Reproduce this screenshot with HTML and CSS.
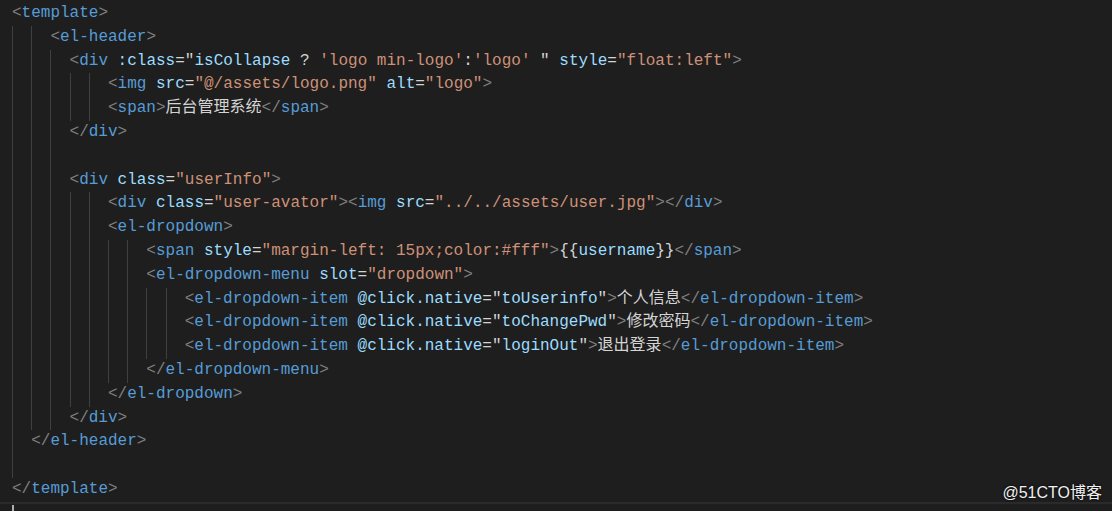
FILE: index.html
```html
<!DOCTYPE html>
<html lang="en">
<head>
    <meta charset="UTF-8">
    <title>template</title>
    <link rel="stylesheet" href="styles.css">
</head>
<body>
<div class="editor">
    <div class="line"><span class="p">&lt;</span><span class="t">template</span><span class="p">&gt;</span></div>
    <div class="line"><i></i><i></i><span class="p">&lt;</span><span class="t">el-header</span><span class="p">&gt;</span></div>
    <div class="line"><i></i><i></i><i></i><span class="p">&lt;</span><span class="t">div</span> <span class="a">:class</span>=<span class="w">"</span><span class="a">isCollapse</span> ? <span class="s">'logo min-logo'</span>:<span class="s">'logo'</span> <span class="w">"</span> <span class="a">style</span>=<span class="s">"float:left"</span><span class="p">&gt;</span></div>
    <div class="line"><i></i><i></i><i></i><i></i><i></i><span class="p">&lt;</span><span class="t">img</span> <span class="a">src</span>=<span class="s">"@/assets/logo.png"</span> <span class="a">alt</span>=<span class="s">"logo"</span><span class="p">&gt;</span></div>
    <div class="line"><i></i><i></i><i></i><i></i><i></i><span class="p">&lt;</span><span class="t">span</span><span class="p">&gt;</span>后台管理系统<span class="p">&lt;/</span><span class="t">span</span><span class="p">&gt;</span></div>
    <div class="line"><i></i><i></i><i></i><span class="p">&lt;/</span><span class="t">div</span><span class="p">&gt;</span></div>
    <div class="line"><i></i><i></i><i></i></div>
    <div class="line"><i></i><i></i><i></i><span class="p">&lt;</span><span class="t">div</span> <span class="a">class</span>=<span class="s">"userInfo"</span><span class="p">&gt;</span></div>
    <div class="line"><i></i><i></i><i></i><i></i><i></i><span class="p">&lt;</span><span class="t">div</span> <span class="a">class</span>=<span class="s">"user-avator"</span><span class="p">&gt;&lt;</span><span class="t">img</span> <span class="a">src</span>=<span class="s">"../../assets/user.jpg"</span><span class="p">&gt;&lt;/</span><span class="t">div</span><span class="p">&gt;</span></div>
    <div class="line"><i></i><i></i><i></i><i></i><i></i><span class="p">&lt;</span><span class="t">el-dropdown</span><span class="p">&gt;</span></div>
    <div class="line"><i></i><i></i><i></i><i></i><i></i><i></i><i></i><span class="p">&lt;</span><span class="t">span</span> <span class="a">style</span>=<span class="s">"margin-left: 15px;color:#fff"</span><span class="p">&gt;</span>{{<span class="a">username</span>}}<span class="p">&lt;/</span><span class="t">span</span><span class="p">&gt;</span></div>
    <div class="line"><i></i><i></i><i></i><i></i><i></i><i></i><i></i><span class="p">&lt;</span><span class="t">el-dropdown-menu</span> <span class="a">slot</span>=<span class="s">"dropdown"</span><span class="p">&gt;</span></div>
    <div class="line"><i></i><i></i><i></i><i></i><i></i><i></i><i></i><i></i><i></i><span class="p">&lt;</span><span class="t">el-dropdown-item</span> <span class="a">@click.native</span>=<span class="w">"</span><span class="a">toUserinfo</span><span class="w">"</span><span class="p">&gt;</span>个人信息<span class="p">&lt;/</span><span class="t">el-dropdown-item</span><span class="p">&gt;</span></div>
    <div class="line"><i></i><i></i><i></i><i></i><i></i><i></i><i></i><i></i><i></i><span class="p">&lt;</span><span class="t">el-dropdown-item</span> <span class="a">@click.native</span>=<span class="w">"</span><span class="a">toChangePwd</span><span class="w">"</span><span class="p">&gt;</span>修改密码<span class="p">&lt;/</span><span class="t">el-dropdown-item</span><span class="p">&gt;</span></div>
    <div class="line"><i></i><i></i><i></i><i></i><i></i><i></i><i></i><i></i><i></i><span class="p">&lt;</span><span class="t">el-dropdown-item</span> <span class="a">@click.native</span>=<span class="w">"</span><span class="a">loginOut</span><span class="w">"</span><span class="p">&gt;</span>退出登录<span class="p">&lt;/</span><span class="t">el-dropdown-item</span><span class="p">&gt;</span></div>
    <div class="line"><i></i><i></i><i></i><i></i><i></i><i></i><i></i><span class="p">&lt;/</span><span class="t">el-dropdown-menu</span><span class="p">&gt;</span></div>
    <div class="line"><i></i><i></i><i></i><i></i><i></i><span class="p">&lt;/</span><span class="t">el-dropdown</span><span class="p">&gt;</span></div>
    <div class="line"><i></i><i></i><i></i><span class="p">&lt;/</span><span class="t">div</span><span class="p">&gt;</span></div>
    <div class="line"><i></i><span class="p">&lt;/</span><span class="t">el-header</span><span class="p">&gt;</span></div>
    <div class="line"><i></i></div>
    <div class="line"><span class="p">&lt;/</span><span class="t">template</span><span class="p">&gt;</span></div>
    <div class="line current"><span class="cursor"></span></div>
</div>
<div class="watermark">@51CTO博客</div>
</body>
</html>
```

FILE: styles.css
```css
* {
    margin: 0;
    padding: 0;
}
body {
    background-color: #1e1e1e;
    height: 511px;
    overflow: hidden;
    position: relative;
}
.editor {
    padding-top: 2px;
    padding-left: 12px;
    font-family: "Liberation Mono", "Noto Sans CJK SC", monospace;
    font-size: 16px;
    color: #d4d4d4;
}
.line {
    height: 23.8px;
    line-height: 23.8px;
    white-space: pre;
}
/* indent guide, one per 2 columns */
.line i {
    display: inline-block;
    width: 19.2px;
    height: 23.8px;
    vertical-align: top;
    border-left: 1px solid #404040;
    box-sizing: border-box;
}
.p {
    color: #808080;
}
.t {
    color: #569cd6;
}
.a {
    color: #9cdcfe;
}
.s {
    color: #ce9178;
}
.w {
    color: #d4d4d4;
}
.current {
    border-top: 2px solid #2a2a2a;
    border-bottom: 2px solid #2a2a2a;
    margin-left: -12px;
    padding-left: 12px;
}
.cursor {
    display: inline-block;
    width: 2px;
    height: 20px;
    margin-top: 1px;
    vertical-align: top;
    background-color: #aeafad;
}
.watermark {
    position: absolute;
    right: 10px;
    bottom: 8px;
    font-family: "Liberation Sans", "Noto Sans CJK SC", sans-serif;
    font-size: 16px;
    color: #f0f0f0;
    text-shadow: 0 0 3px #000;
}
```
